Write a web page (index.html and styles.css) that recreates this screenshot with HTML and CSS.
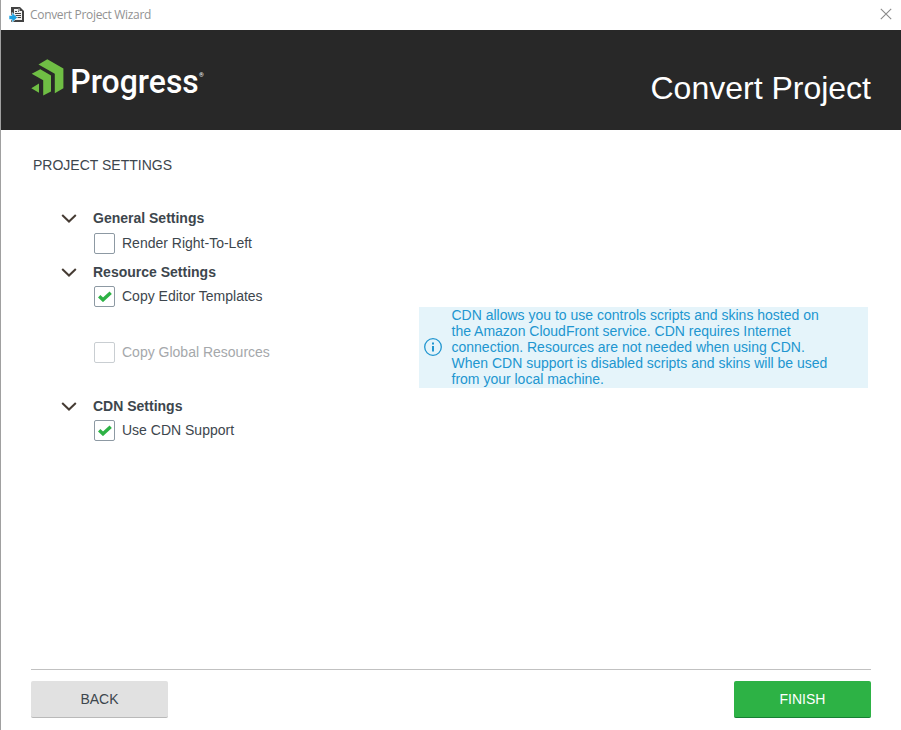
FILE: index.html
```html
<!DOCTYPE html>
<html lang="en">
<head>
<meta charset="utf-8">
<title>Convert Project Wizard</title>
<link rel="stylesheet" href="styles.css">
</head>
<body>
<div class="window">
  <div class="titlebar">
    <svg class="app-icon" width="16" height="16" viewBox="0 0 16 16">
      <path d="M2 0h9l4 4v11H2z" fill="#424242"/>
      <path d="M5 2h4v3h4v8H5z" fill="#f0f0f0"/>
      <path d="M6 4.500h2M6 6.500h6M6 8.500h6M6 10.500h6" stroke="#424242"/>
      <path d="M10 1.500v3h3" fill="none" stroke="#f0f0f0"/>
      <path d="M0 8.500h3v-3l5.500 5-5.500 5v-3H0z" fill="#1ba1e2" stroke="#fff" stroke-width=".6"/>
    </svg>
    <span class="caption">Convert Project Wizard</span>
    <svg class="close" width="12" height="12" viewBox="0 0 12 12"><path d="M.8.800l10.400 10.400M11.200.800L.8 11.200" stroke="#8a8a8a" stroke-width="1.100"/></svg>
  </div>
  <header class="banner">
    <svg class="logo" width="180" height="50" viewBox="30 55 180 50">
      <g fill="#6fbe44">
        <path d="M47.300 59.200L63.400 68.400V88.200L54.800 93.300V73.800L38.500 64.500z"/>
        <path d="M40.300 69.300L51 75.600V91.500L43.200 95.500V80.300L31.700 73.800z"/>
        <path d="M31.300 88.200L39 83.600V92.700z"/>
      </g>
      <text class="wordmark" x="70.300" y="93.300" textLength="128.500" lengthAdjust="spacingAndGlyphs">Progress</text>
      <text class="registered" x="198.900" y="77.300">®</text>
    </svg>
    <h1>Convert Project</h1>
  </header>
  <main>
    <h2>PROJECT SETTINGS</h2>
    <div class="columns">
      <div class="settings">
        <div class="group"><svg class="chevron" width="16" height="9" viewBox="0 0 16 9"><path d="M1.200 1l6.800 6.500L14.800 1"/></svg>General Settings</div>
        <div class="option"><span class="box"></span>Render Right-To-Left</div>
        <div class="group resource"><svg class="chevron" width="16" height="9" viewBox="0 0 16 9"><path d="M1.200 1l6.800 6.500L14.800 1"/></svg>Resource Settings</div>
        <div class="option copy"><span class="box"><svg width="14" height="11" viewBox="0 0 14 11"><path d="M1.200 5.200l3.800 3.600L12.700 1.800"/></svg></span>Copy Editor Templates</div>
        <div class="option disabled"><span class="box"></span>Copy Global Resources</div>
        <div class="group cdn"><svg class="chevron" width="16" height="9" viewBox="0 0 16 9"><path d="M1.200 1l6.800 6.500L14.800 1"/></svg>CDN Settings</div>
        <div class="option copy"><span class="box"><svg width="14" height="11" viewBox="0 0 14 11"><path d="M1.200 5.200l3.800 3.600L12.700 1.800"/></svg></span>Use CDN Support</div>
      </div>
      <aside class="info">
        <svg width="18" height="18" viewBox="0 0 18 18"><circle cx="9" cy="9" r="8.300" fill="none" stroke="#2196d0" stroke-width="1.300"/><path d="M8 4.500h2v2H8zM8 8h2v5.500H8z" fill="#2196d0"/></svg>
        <p>CDN allows you to use controls scripts and skins hosted on<br>the Amazon CloudFront service. CDN requires Internet<br>connection. Resources are not needed when using CDN.<br>When CDN support is disabled scripts and skins will be used<br>from your local machine.</p>
      </aside>
    </div>
  </main>
  <footer>
    <button class="back">BACK</button>
    <button class="finish">FINISH</button>
  </footer>
</div>
</body>
</html>
```
FILE: styles.css
```css
* { box-sizing: border-box; }
body { margin: 0; background: #fff; font: 14px/16px "Liberation Sans", Arial, sans-serif; color: #3d464d; }
.window { height: 730px; display: flex; flex-direction: column; border-left: 1px solid #a0a0a0; overflow: hidden; }
.titlebar { height: 30px; flex: none; display: flex; align-items: center; padding: 0 9px 2px 8px; }
.app-icon { margin-top: 1px; }
.caption { margin: 2px 0 0 5px; font: 12px/16px "Open Sans", "Noto Sans", sans-serif; letter-spacing: -.32px; color: #929292; }
.close { margin-left: auto; }
.banner { height: 100px; flex: none; background: #282828; display: flex; justify-content: space-between; padding: 25px 30px 0 29px; }
.logo { display: block; }
.wordmark { font: 500 34px Roboto, sans-serif; fill: #fff; }
.registered { font: 6px Roboto, sans-serif; fill: #fff; }
h1 { margin: 14px 0 0; font-size: 32px; line-height: 38px; font-weight: 400; color: #fff; }
main { flex: 1; padding: 27px 32px 0; }
h2 { margin: 0; font-size: 14px; line-height: 16px; font-weight: 400; }
.columns { display: flex; padding-top: 37px; }
.settings { width: 385.500px; flex: none; padding-left: 28px; }
.group { height: 16px; display: flex; align-items: center; font-weight: 700; }
.chevron { margin-right: 16px; }
.chevron path { fill: none; stroke: #463c34; stroke-width: 2; }
.option { display: flex; align-items: flex-start; height: 21px; line-height: 20px; margin: 7px 0 0 33px; }
.option.copy { margin-top: 6px; }
.box { width: 21px; height: 21px; margin-right: 7px; border: 1px solid #8d99a3; border-radius: 2px; display: flex; align-items: center; justify-content: center; }
.box path { fill: none; stroke: #2db245; stroke-width: 3.400; }
.resource { margin-top: 10px; }
.option.disabled { margin-top: 35px; color: #a5a8ab; }
.disabled .box { border-color: #c9ced2; }
.cdn { margin-top: 35px; }
.info { width: 449.500px; height: 81px; margin-top: 97px; background: #e5f4fa; color: #2196d0; display: flex; align-items: center; padding: 0 0 1px 5px; }
.info p { margin: 0 0 0 10px; white-space: nowrap; }
footer { height: 61px; flex: none; margin: 0 30px; border-top: 1px solid #c1c1c1; padding-top: 11px; display: flex; justify-content: space-between; }
button { width: 137px; height: 37px; border: 0; border-bottom: 1px solid #b9b9b9; border-radius: 2px; background: #e1e1e1; color: #3d464d; font: inherit; padding: 0; }
.finish { background: #2db245; border-color: #168033; color: #fff; }
```
